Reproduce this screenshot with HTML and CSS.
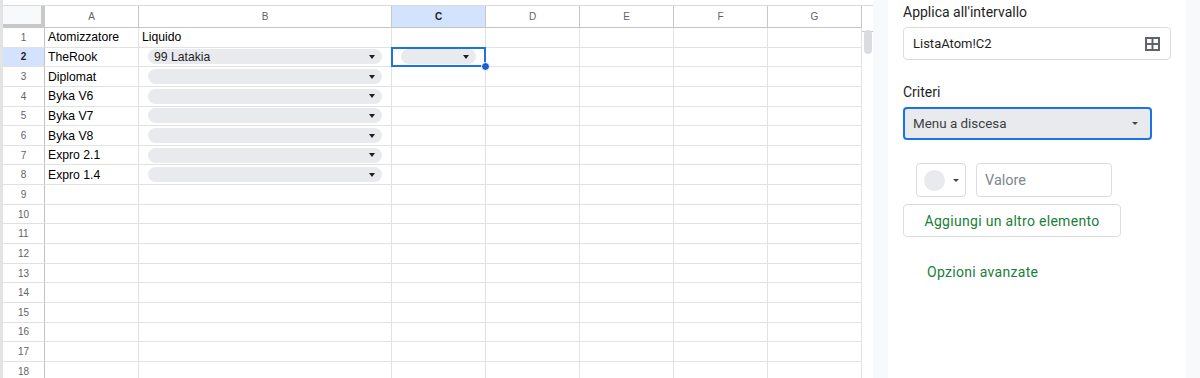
FILE: index.html
```html
<!DOCTYPE html>
<html lang="it">
<head>
    <meta charset="UTF-8">
    <meta name="viewport" content="width=device-width, initial-scale=1.0">
    <title>ListaAtom - Convalida dati</title>
    <link rel="stylesheet" href="styles.css">
</head>
<body>
    <div class="app">
        <div class="sheet">
            <div class="grid-wrap">
                <div class="top-strip"></div>
                <div class="grid" id="grid"></div>
            </div>
            <div class="vscroll">
                <div class="vscroll-head"></div>
                <div class="thumb"></div>
            </div>
        </div>

        <aside class="panel">
            <div class="panel-body">
                <div class="label">Applica all'intervallo</div>
                <div class="range-input">
                    <span>ListaAtom!C2</span>
                    <svg class="range-icon" width="15" height="14" viewBox="0 0 15 14">
                        <rect x="1" y="1" width="13" height="12" fill="none" stroke="#5f6368" stroke-width="2"/>
                        <line x1="7.5" y1="1" x2="7.5" y2="13" stroke="#5f6368" stroke-width="2"/>
                        <line x1="1" y1="7" x2="14" y2="7" stroke="#5f6368" stroke-width="2"/>
                    </svg>
                </div>

                <div class="label criteri">Criteri</div>
                <div class="select">
                    <span>Menu a discesa</span>
                    <span class="caret"></span>
                </div>

                <div class="item-row">
                    <div class="color-btn">
                        <span class="swatch"></span>
                        <span class="caret"></span>
                    </div>
                    <div class="value-input">Valore</div>
                </div>

                <button class="add-btn">Aggiungi un altro elemento</button>

                <div class="advanced">Opzioni avanzate</div>
            </div>
        </aside>
    </div>

    <script>
        const cols = ['A', 'B', 'C', 'D', 'E', 'F', 'G'];
        // [colonna A, colonna B, tipo di B]
        const rows = [
            ['Atomizzatore', 'Liquido', 'text'],
            ['TheRook', '99 Latakia', 'chip'],
            ['Diplomat', '', 'chip'],
            ['Byka V6', '', 'chip'],
            ['Byka V7', '', 'chip'],
            ['Byka V8', '', 'chip'],
            ['Expro 2.1', '', 'chip'],
            ['Expro 1.4', '', 'chip']
        ];
        const totalRows = 18;
        const grid = document.getElementById('grid');

        function chip(text) {
            return '<div class="chip"><span>' + text + '</span><span class="chip-caret"></span></div>';
        }

        let html = '<div class="corner"></div>';
        cols.forEach(function (c) {
            html += '<div class="col-head' + (c === 'C' ? ' active' : '') + '">' + c + '</div>';
        });

        for (let r = 1; r <= totalRows; r++) {
            const data = rows[r - 1];
            html += '<div class="row-head' + (r === 2 ? ' active' : '') + '">' + r + '</div>';
            cols.forEach(function (c) {
                let content = '';
                let cls = 'cell';
                if (data && c === 'A') content = data[0];
                if (data && c === 'B') content = data[2] === 'chip' ? chip(data[1]) : data[1];
                if (r === 2 && c === 'C') {
                    content = chip('');
                    cls += ' selected';
                }
                html += '<div class="' + cls + '">' + content + '</div>';
            });
        }
        grid.innerHTML = html;
    </script>
</body>
</html>
```

FILE: styles.css
```css
body {
    margin: 0;
    font-family: "Liberation Sans", Arial, sans-serif;
    background: #fff;
    overflow: hidden;
}
.app {
    display: flex;
    height: 378px;
}
.sheet {
    display: flex;
    width: 873px;
    flex-shrink: 0;
}
.grid-wrap {
    border-left: 3px solid #e3e3e3;
}
.top-strip {
    height: 5px;
    border-bottom: 1px solid #dadada;
}
.grid {
    display: grid;
    grid-template-columns: 42px 94px 253px 94px 94px 94px 94px 94px;
    grid-template-rows: 22px;
    grid-auto-rows: 19.65px;
}
.corner {
    background: #f8f9fa;
    border-right: 4px solid #c8c8c8;
    border-bottom: 4px solid #c8c8c8;
}
.col-head {
    display: flex;
    align-items: center;
    justify-content: center;
    font-size: 10px;
    color: #5f6368;
    border-right: 1px solid #c7c7c7;
    border-bottom: 1px solid #c4c4c4;
}
.col-head.active,
.row-head.active {
    background: #d3e3fd;
    color: #1f1f1f;
    font-weight: bold;
}
.row-head {
    display: flex;
    align-items: center;
    justify-content: center;
    font-size: 10px;
    color: #5f6368;
    border-right: 1px solid #c4c4c4;
    border-bottom: 1px solid #e1e1e1;
}
.cell {
    position: relative;
    display: flex;
    align-items: center;
    padding-left: 3px;
    font-size: 12.2px;
    color: #000;
    border-right: 1px solid #e2e2e2;
    border-bottom: 1px solid #e2e2e2;
    white-space: nowrap;
}
.chip {
    flex: 1;
    display: flex;
    align-items: center;
    justify-content: space-between;
    height: 15px;
    margin: 0 9px 0 6px;
    padding: 0 7px 0 6px;
    border-radius: 8px;
    background: #e9eaee;
    color: #1f1f1f;
}
.chip-caret {
    width: 0;
    height: 0;
    border-left: 3.5px solid transparent;
    border-right: 3.5px solid transparent;
    border-top: 4px solid #1f1f1f;
}
.cell.selected::after {
    content: "";
    position: absolute;
    left: -1px;
    top: -1px;
    right: -1px;
    bottom: -1px;
    border: 2px solid #1a73e8;
}
.cell.selected::before {
    content: "";
    position: absolute;
    right: -5px;
    bottom: -5px;
    width: 7px;
    height: 7px;
    border-radius: 50%;
    background: #1a5fd0;
    border: 1px solid #fff;
    z-index: 2;
}
.vscroll {
    position: relative;
    width: 11px;
}
.vscroll-head {
    height: 27px;
    border-top: 1px solid #dadada;
    margin-top: 5px;
    border-bottom: 1px solid #c4c4c4;
    box-sizing: border-box;
}
.thumb {
    position: absolute;
    left: 2px;
    top: 30px;
    width: 8px;
    height: 24px;
    border-radius: 4px;
    background: #dadce0;
}

/* pannello laterale */
.panel {
    flex: 1;
    background: #f8f9fa;
    font-family: Roboto, "Liberation Sans", Arial, sans-serif;
    color: #1f1f1f;
}
.panel-body {
    margin-left: 15px;
    width: 283px;
    height: 100%;
    padding: 2px 0 0 15px;
    background: #fff;
}
.label {
    font-size: 14px;
    line-height: 20px;
}
.criteri {
    margin-top: 22px;
}
.range-input,
.select {
    display: flex;
    align-items: center;
    justify-content: space-between;
    box-sizing: border-box;
    height: 33px;
    padding: 0 10px 0 9px;
    font-size: 13px;
    border-radius: 4px;
}
.range-input {
    width: 268px;
    margin-top: 5px;
    border: 1px solid #dadce0;
}
.range-icon {
    display: block;
}
.select {
    width: 249px;
    margin-top: 5px;
    padding: 0 12px 0 8px;
    font-size: 13.4px;
    background: #e8eaed;
    border: 2px solid #1a73e8;
    color: #3c4043;
}
.caret {
    width: 0;
    height: 0;
    border-left: 3.5px solid transparent;
    border-right: 3.5px solid transparent;
    border-top: 3.5px solid #444746;
}
.item-row {
    display: flex;
    gap: 10px;
    margin-top: 23px;
    padding-left: 13px;
}
.color-btn,
.value-input {
    box-sizing: border-box;
    height: 34px;
    border: 1px solid #dadce0;
    border-radius: 4px;
}
.color-btn {
    display: flex;
    align-items: center;
    width: 50px;
    padding-left: 7px;
    gap: 8px;
}
.swatch {
    width: 21px;
    height: 21px;
    border-radius: 50%;
    background: #e8eaed;
}
.value-input {
    display: flex;
    align-items: center;
    width: 136px;
    padding-left: 8px;
    font-size: 14.5px;
    color: #80868b;
}
.add-btn {
    display: block;
    width: 218px;
    height: 33px;
    margin-top: 7px;
    background: #fff;
    border: 1px solid #dadce0;
    border-radius: 4px;
    font-family: Roboto, "Liberation Sans", Arial, sans-serif;
    font-size: 14px;
    letter-spacing: 0.3px;
    color: #188038;
    cursor: pointer;
}
.advanced {
    margin-top: 25px;
    padding-left: 24px;
    font-size: 14px;
    letter-spacing: 0.3px;
    line-height: 20px;
    color: #188038;
}
```
